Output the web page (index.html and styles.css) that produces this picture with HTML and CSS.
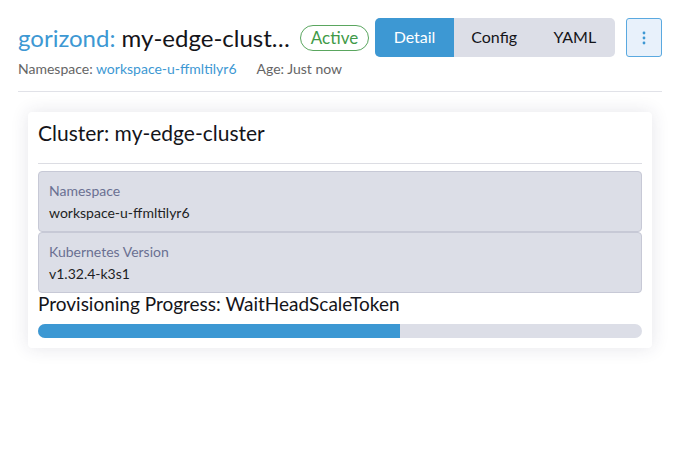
FILE: index.html
```html
<!DOCTYPE html>
<html>
<head>
<meta charset="utf-8">
<link rel="stylesheet" href="styles.css">
</head>
<body>
<div class="page">
  <header class="head">
    <div class="head-row">
      <h1 class="title"><span class="kind">gorizond:</span> my-edge-cluster</h1>
      <span class="badge">Active</span>
      <div class="tabs">
        <button class="tab active">Detail</button>
        <button class="tab">Config</button>
        <button class="tab">YAML</button>
      </div>
      <button class="menu" aria-label="More actions">
        <svg width="4" height="14" viewBox="0 0 4 14"><circle cx="2" cy="2" r="1.4" fill="#3d98d3"/><circle cx="2" cy="7" r="1.4" fill="#3d98d3"/><circle cx="2" cy="12" r="1.4" fill="#3d98d3"/></svg>
      </button>
    </div>
    <div class="meta">
      <span>Namespace: <a class="link" href="#">workspace-u-ffmltilyr6</a></span>
      <span>Age: Just now</span>
    </div>
  </header>
  <hr class="rule">
  <section class="card">
    <h2 class="card-title">Cluster: my-edge-cluster</h2>
    <hr class="card-rule">
    <div class="field">
      <div class="label">Namespace</div>
      <div class="value">workspace-u-ffmltilyr6</div>
    </div>
    <div class="field">
      <div class="label">Kubernetes Version</div>
      <div class="value">v1.32.4-k3s1</div>
    </div>
    <div class="progress-title">Provisioning Progress: WaitHeadScaleToken</div>
    <div class="bar"><div class="fill" style="width:60%"></div></div>
  </section>
</div>
</body>
</html>
```
FILE: styles.css
```css
* { box-sizing: border-box; }
html, body { margin: 0; background: #fff; }
body { font-family: Lato, "Noto Sans", sans-serif; color: #141419; }
.page { padding: 18px 17px 30px 18px; }
.head-row { display: flex; align-items: center; height: 39px; }
.title {
  margin: 0; font-size: 24px; font-weight: 400; line-height: 32px;
  width: 274px; white-space: nowrap; overflow: hidden; text-overflow: ellipsis;
  color: #141419;
}
.kind { color: #3d98d3; }
.badge {
  margin-left: 9px; height: 26px; padding: 0 10px; border: 1px solid #5aa65f;
  border-radius: 13px; color: #3f9a48; font-size: 17px; line-height: 23px;
}
.tabs {
  margin-left: 6px; display: flex; background: #dcdee7; border-radius: 5px; overflow: hidden; height: 39px;
}
.tab {
  width: 81px; border: 0; background: transparent; font-family: inherit; font-size: 16px;
  color: #141419; padding: 0 0 2px; height: 39px;
}
.tab.active { background: #3d98d3; color: #fff; width: 79px; }
.menu {
  margin-left: 11px; width: 36px; height: 39px; border: 1.5px solid #5aa9e0; border-radius: 3px;
  background: #e8f1fb; display: flex; align-items: center; justify-content: center; padding: 0;
}
.meta { display: flex; gap: 20px; font-size: 14px; color: #656565; margin-top: 3px; line-height: 18px; }
.link { color: #3d98d3; text-decoration: none; }
.rule { border: 0; border-top: 1px solid #e1e2e8; margin: 13px 0 0; }
.card {
  margin: 20px 10px 0; background: #fff; border-radius: 4px; padding: 8px 10px 10px;
  box-shadow: 0 0 18px rgba(40, 40, 80, 0.12);
}
.card-title { margin: 0; font-size: 21px; font-weight: 400; line-height: 26px; }
.card-rule { border: 0; border-top: 1px solid #dcdde3; margin: 17px 0 7px; }
.field {
  background: #dcdee7; border: 1px solid #c7c9d6; border-radius: 4px; padding: 9px 10px 9px;
  height: 61px;
}
.label { color: #6a7092; font-size: 14px; line-height: 20px; }
.value { color: #1e1e24; font-size: 14px; line-height: 21px; margin-top: 1px; }
.progress-title { font-size: 19px; line-height: 21px; }
.bar { margin-top: 10px; height: 14px; background: #dcdee7; border-radius: 7px; overflow: hidden; }
.fill { height: 100%; background: #3c98d3; }
```
